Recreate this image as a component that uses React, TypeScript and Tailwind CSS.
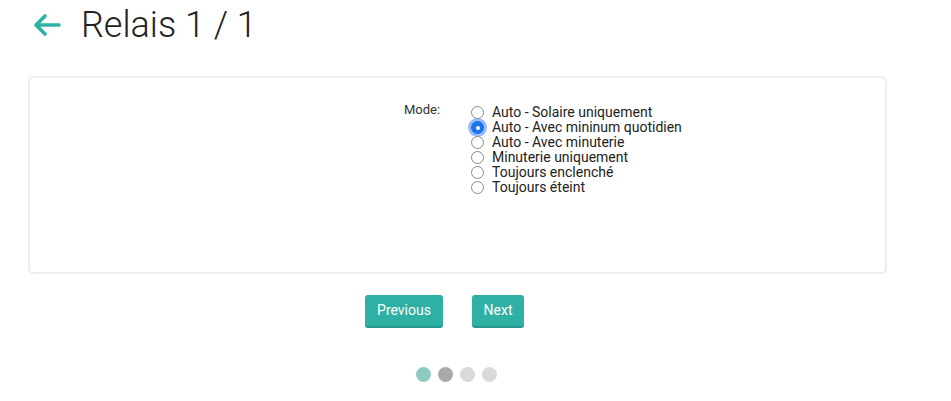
import { useState } from "react";

const modes = [
  "Auto - Solaire uniquement",
  "Auto - Avec mininum quotidien",
  "Auto - Avec minuterie",
  "Minuterie uniquement",
  "Toujours enclenché",
  "Toujours éteint",
];

function Radio({ checked }: { checked: boolean }) {
  if (checked) {
    return (
      <span className="flex items-center justify-center w-[13px] h-[13px] mr-[8px] rounded-full bg-[#1a73e8] shadow-[0_0_0_3px_rgba(66,133,244,0.55)]">
        <span className="w-[4px] h-[4px] rounded-full bg-white" />
      </span>
    );
  }
  return <span className="w-[13px] h-[13px] mr-[8px] rounded-full border border-[#8a8a8a] bg-white" />;
}

function App() {
  const [mode, setMode] = useState(1);

  return (
    <div className="min-h-screen w-[951px] bg-white font-['Roboto',sans-serif] text-[#222]">
      <header className="flex items-center h-[50px] pl-[32px]">
        <svg width="30" height="24" viewBox="0 0 30 24" className="text-[#2db3a5]">
          <path
            d="M27 12H4M13 3L4 12L13 21"
            fill="none"
            stroke="currentColor"
            strokeWidth="3.6"
            strokeLinecap="round"
            strokeLinejoin="round"
          />
        </svg>
        <h1 className="ml-[19px] text-[36px] font-light leading-none">Relais 1 / 1</h1>
      </header>

      <div className="mt-[26px] ml-[28px] w-[859px] h-[198px] border-2 border-[#eeeeee] rounded-[5px]">
        <div className="flex pt-[24px] pl-[374px]">
          <span className="text-[13px] leading-[15px] text-[#333] w-[67px]">Mode:</span>
          <div className="flex flex-col pt-[3px]">
            {modes.map((m, i) => (
              <label
                key={m}
                onClick={() => setMode(i)}
                className="flex items-center h-[15px] text-[14px] leading-[15px] text-[#222] cursor-pointer"
              >
                <Radio checked={mode === i} />
                {m}
              </label>
            ))}
          </div>
        </div>
      </div>

      <div className="flex justify-center gap-[29px] mt-[21px] pr-[62px]">
        <button className="h-[31px] w-[78px] rounded-[3px] bg-[#2fb0a5] text-white text-[14px] shadow-[0_2px_0_#27968c]">
          Previous
        </button>
        <button className="h-[31px] w-[52px] rounded-[3px] bg-[#2fb0a5] text-white text-[14px] shadow-[0_2px_0_#27968c]">
          Next
        </button>
      </div>

      <div className="flex justify-center gap-[7px] mt-[41px] pr-[39px]">
        <span className="w-[15px] h-[15px] rounded-full bg-[#8fc9c3]" />
        <span className="w-[15px] h-[15px] rounded-full bg-[#a9a9a9]" />
        <span className="w-[15px] h-[15px] rounded-full bg-[#d9d9d9]" />
        <span className="w-[15px] h-[15px] rounded-full bg-[#d9d9d9]" />
      </div>
    </div>
  );
}

export default App;
